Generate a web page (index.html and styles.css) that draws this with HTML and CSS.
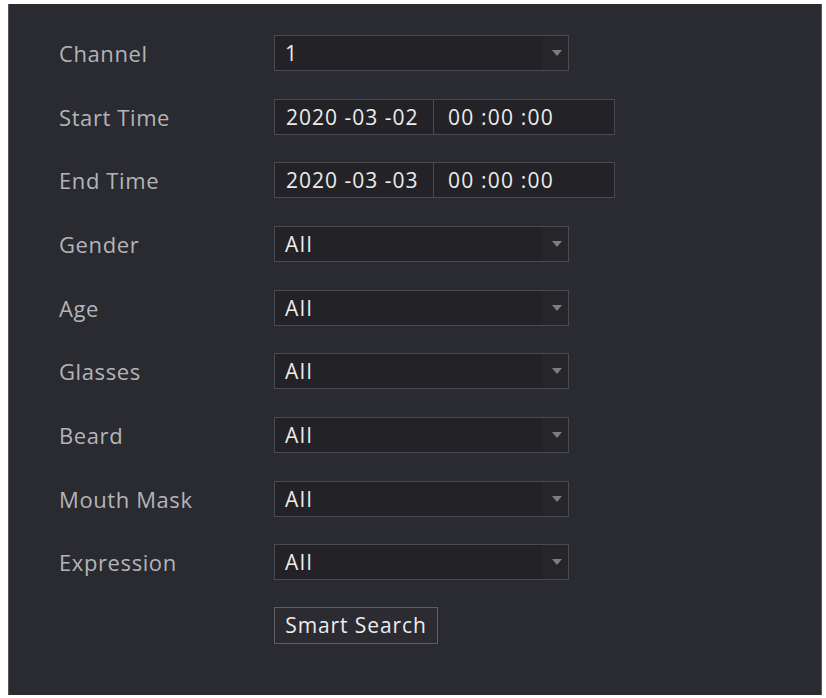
FILE: index.html
```html
<!DOCTYPE html>
<html lang="en">
<head>
<meta charset="utf-8">
<title>Smart Search</title>
<link rel="stylesheet" href="styles.css">
</head>
<body>
<div class="panel">
  <div class="form">
    <div class="label">Channel</div>
    <div class="select"><span class="value">1</span><span class="arrow"></span></div>

    <div class="label">Start Time</div>
    <div class="datetime"><span class="date">2020 -03 -02</span><span class="time">00 :00 :00</span></div>

    <div class="label">End Time</div>
    <div class="datetime"><span class="date">2020 -03 -03</span><span class="time">00 :00 :00</span></div>

    <div class="label">Gender</div>
    <div class="select"><span class="value">All</span><span class="arrow"></span></div>

    <div class="label">Age</div>
    <div class="select"><span class="value">All</span><span class="arrow"></span></div>

    <div class="label">Glasses</div>
    <div class="select"><span class="value">All</span><span class="arrow"></span></div>

    <div class="label">Beard</div>
    <div class="select"><span class="value">All</span><span class="arrow"></span></div>

    <div class="label">Mouth Mask</div>
    <div class="select"><span class="value">All</span><span class="arrow"></span></div>

    <div class="label">Expression</div>
    <div class="select"><span class="value">All</span><span class="arrow"></span></div>

    <div class="spacer"></div>
    <div class="actions"><button class="button">Smart Search</button></div>
  </div>
</div>
</body>
</html>
```
FILE: styles.css
```css
html, body {
  margin: 0;
  padding: 0;
  background: #ffffff;
}

body {
  font-family: "Open Sans", "Noto Sans", "Liberation Sans", sans-serif;
}

.panel {
  box-sizing: border-box;
  margin: 4px 4px 0 8px;
  height: 691px;
  padding: 31px 0 0 50px;
  background: #2a2a31;
  border-left: 1px solid #55555a;
  border-right: 1px solid #55555a;
}

.form {
  display: grid;
  grid-template-columns: 215px auto;
  grid-auto-rows: 36px;
  row-gap: 27.67px;
  align-items: center;
}

.label {
  font-size: 22px;
  letter-spacing: 0.6px;
  color: #b4b4b8;
  line-height: 36px;
}

.select,
.datetime {
  box-sizing: border-box;
  height: 36px;
  border: 1px solid #4a4a51;
  background: #222227;
  display: flex;
  align-items: center;
  color: #ececec;
  font-size: 21px;
}

.select {
  width: 295px;
  padding: 0 0 0 10px;
  justify-content: space-between;
}

.value {
  line-height: 34px;
  letter-spacing: 1.5px;
  font-weight: 500;
}

.arrow {
  width: 26px;
  height: 34px;
  display: flex;
  align-items: center;
  justify-content: center;
  background: #25252a;
}

.arrow::before {
  content: "";
  width: 0;
  height: 0;
  border-left: 5px solid transparent;
  border-right: 5px solid transparent;
  border-top: 6px solid #7c7c82;
  margin-left: 4px;
}

.datetime {
  width: 341px;
}

.date {
  box-sizing: border-box;
  width: 159px;
  height: 100%;
  padding-left: 11px;
  border-right: 1px solid #4a4a51;
  display: flex;
  align-items: center;
  white-space: pre;
  letter-spacing: 1px;
}

.time {
  padding-left: 14px;
  white-space: pre;
  letter-spacing: 1.2px;
}

.spacer {
  height: 36px;
}

.actions {
  display: flex;
  align-items: center;
}

.button {
  box-sizing: border-box;
  width: 164px;
  height: 37px;
  padding: 0;
  border: 1px solid #5e5e65;
  background: #2b2b31;
  color: #ececec;
  font-family: "Open Sans", "Noto Sans", "Liberation Sans", sans-serif;
  font-size: 21px;
  letter-spacing: 0.9px;
  line-height: 35px;
  text-align: center;
}
```
